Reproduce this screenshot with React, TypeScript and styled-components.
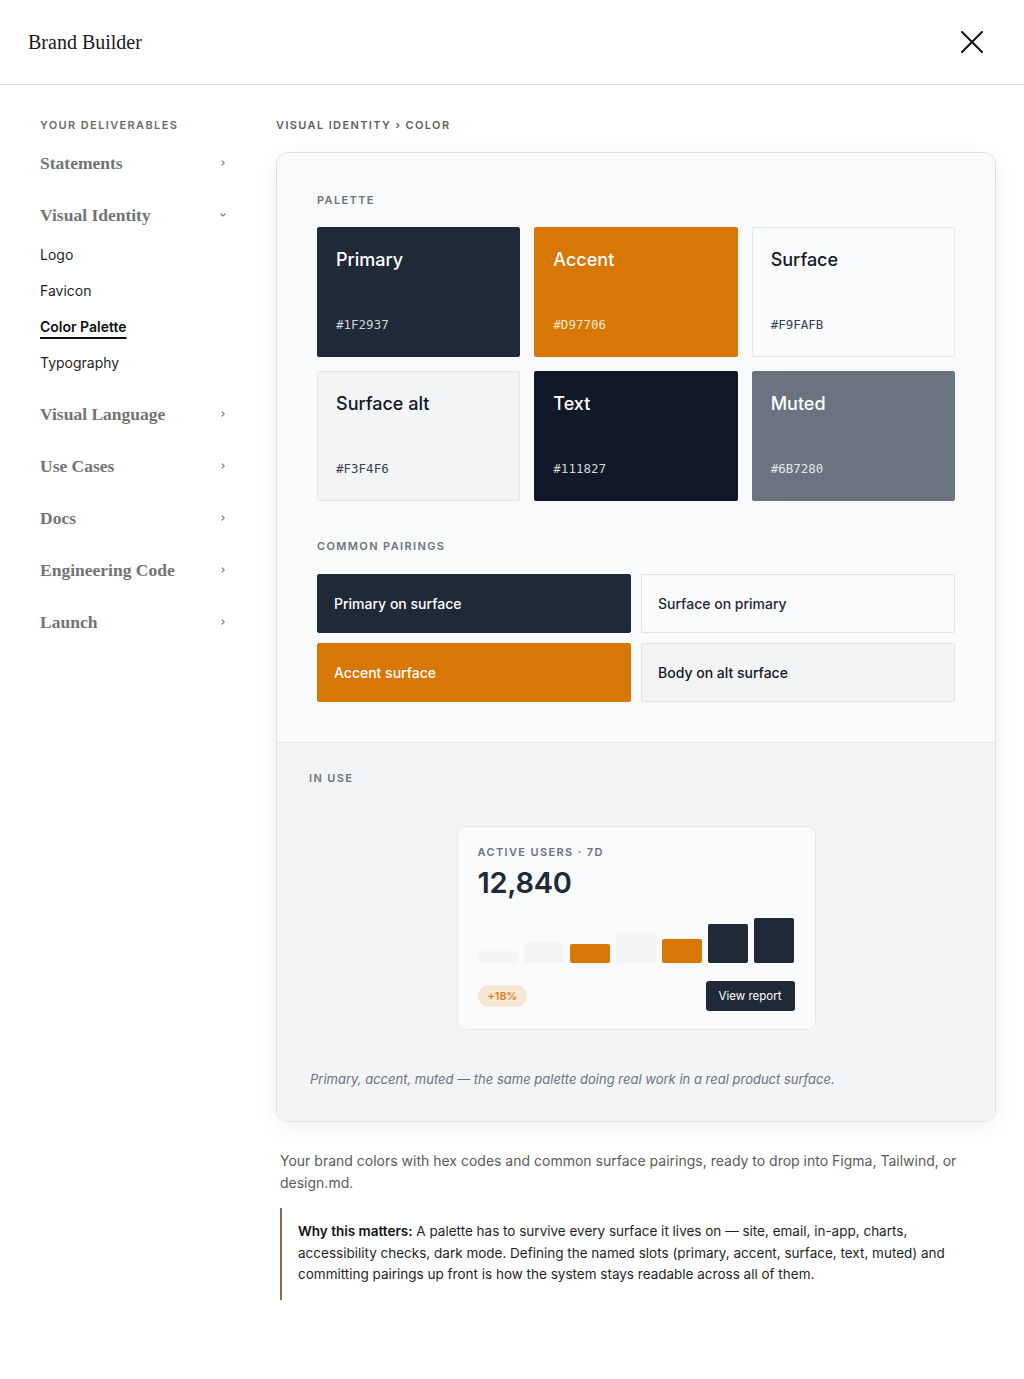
import React from "react";
import styled, { createGlobalStyle } from "styled-components";

const Global = createGlobalStyle`
  * { box-sizing: border-box; }
  html, body { margin: 0; padding: 0; background: #ffffff; }
  body {
    font-family: Inter, "Noto Sans", "Liberation Sans", sans-serif;
    color: #111827;
    -webkit-font-smoothing: antialiased;
  }
`;

const Page = styled.div`
  width: 1024px;
  min-height: 1379px;
  background: #ffffff;
`;

const Header = styled.header`
  height: 85px;
  padding: 0 40px 0 28px;
  display: flex;
  align-items: center;
  justify-content: space-between;
  border-bottom: 1px solid #e4ded7;
`;

const Brand = styled.h1`
  margin: 0;
  font-family: "Liberation Serif", "DejaVu Serif", serif;
  font-size: 20px;
  font-weight: 400;
  color: #1a1a1a;
`;

const CloseButton = styled.button`
  border: 0;
  background: transparent;
  padding: 0;
  width: 24px;
  height: 24px;
  display: flex;
  align-items: center;
  justify-content: center;
  color: #111111;
`;

const Body = styled.div`
  display: flex;
  gap: 40px;
`;

const Sidebar = styled.nav`
  width: 236px;
  flex-shrink: 0;
  padding: 33px 8px 0 40px;
`;

const Eyebrow = styled.div<{ $tone?: string }>`
  font-family: Inter, "Liberation Sans", sans-serif;
  font-size: 11px;
  line-height: 14px;
  font-weight: 600;
  letter-spacing: 0.125em;
  text-transform: uppercase;
  color: ${(p) => p.$tone ?? "#6b6b6b"};
`;

const NavList = styled.div`
  margin-top: 5px;
  display: flex;
  flex-direction: column;
`;

const GroupRow = styled.div`
  height: 52px;
  display: flex;
  align-items: center;
  justify-content: space-between;
  font-family: "Liberation Serif", "DejaVu Serif", serif;
  font-size: 17.5px;
  font-weight: 700;
  color: #737373;
`;

const SubList = styled.div`
  margin: -5px 0 8px;
  display: flex;
  flex-direction: column;
`;

const SubItem = styled.div<{ $active?: boolean }>`
  height: 36px;
  display: flex;
  align-items: center;
  font-size: 14px;
  font-weight: ${(p) => (p.$active ? 600 : 400)};
  color: ${(p) => (p.$active ? "#111111" : "#1f1f1f")};

  span {
    ${(p) =>
      p.$active
        ? `text-decoration: underline; text-decoration-thickness: 2px; text-underline-offset: 5px;`
        : ""}
  }
`;

const Main = styled.main`
  width: 720px;
  padding-top: 33px;
  padding-bottom: 60px;
`;

const Crumb = styled(Eyebrow)`
  margin-bottom: 20px;
  color: #5f5f5f;
`;

const Card = styled.section`
  border: 1px solid #e7ded3;
  border-radius: 12px;
  background: #f9fafb;
  overflow: hidden;
  box-shadow: 0 6px 22px rgba(17, 24, 39, 0.06);
`;

const TopPart = styled.div`
  padding: 40px 40px 40px;
`;

const SwatchGrid = styled.div`
  margin-top: 20px;
  display: grid;
  grid-template-columns: repeat(3, 1fr);
  gap: 14px;
`;

const Swatch = styled.div<{ $bg: string; $fg: string; $hex: string; $outlined?: boolean }>`
  height: 130px;
  border-radius: 2px;
  background: ${(p) => p.$bg};
  border: 1px solid ${(p) => (p.$outlined ? "#e5e7eb" : p.$bg)};
  padding: 20px 18px 23px;
  display: flex;
  flex-direction: column;
  justify-content: space-between;

  strong {
    font-size: 18px;
    line-height: 24px;
    font-weight: 500;
    color: ${(p) => p.$fg};
  }

  code {
    font-family: "DejaVu Sans Mono", "Liberation Mono", monospace;
    font-size: 12.5px;
    line-height: 16px;
    color: ${(p) => p.$hex};
  }
`;

const PairLabel = styled(Eyebrow)`
  margin-top: 38px;
`;

const PairGrid = styled.div`
  margin-top: 21px;
  display: grid;
  grid-template-columns: 1fr 1fr;
  gap: 10px;
`;

const Pair = styled.div<{ $bg: string; $fg: string; $outlined?: boolean }>`
  height: 59px;
  border-radius: 2px;
  background: ${(p) => p.$bg};
  border: 1px solid ${(p) => (p.$outlined ? "#dfe2e6" : p.$bg)};
  color: ${(p) => p.$fg};
  display: flex;
  align-items: center;
  padding: 0 16px;
  font-size: 14px;
  font-weight: 500;
`;

const InUse = styled.div`
  background: #f3f4f6;
  border-top: 1px solid #e5e7eb;
  padding: 28px 32px 32px;
`;

const DemoCard = styled.div`
  width: 359px;
  margin: 41px auto 0;
  background: #f9fafb;
  border: 1px solid #e5e7eb;
  border-radius: 8px;
  padding: 18px 20px 18px;
`;

const Metric = styled.div`
  margin-top: 6px;
  font-size: 29px;
  line-height: 36px;
  font-weight: 600;
  color: #1f2937;
  letter-spacing: -0.01em;
`;

const Bars = styled.div`
  margin-top: 17px;
  height: 45px;
  display: flex;
  align-items: flex-end;
  gap: 6px;
`;

const Bar = styled.div<{ $color: string }>`
  flex: 1;
  border-radius: 2px;
  background: ${(p) => p.$color};
`;

const DemoFooter = styled.div`
  margin-top: 18px;
  display: flex;
  align-items: center;
  justify-content: space-between;
`;

const Delta = styled.span`
  height: 22px;
  padding: 0 10px;
  border-radius: 11px;
  background: #f6e6d4;
  color: #d97706;
  font-size: 11px;
  font-weight: 500;
  display: inline-flex;
  align-items: center;
`;

const ReportButton = styled.button`
  height: 30px;
  padding: 0 13px;
  border: 0;
  border-radius: 3px;
  background: #1f2937;
  color: #ffffff;
  font-family: Inter, "Liberation Sans", sans-serif;
  font-size: 11.5px;
`;

const Caption = styled.p`
  margin: 39px 0 0 1px;
  font-size: 13px;
  line-height: 20px;
  font-style: italic;
  color: #6b7280;
`;

const Description = styled.p`
  margin: 28px 0 0;
  padding: 0 4px;
  max-width: 700px;
  font-size: 14px;
  line-height: 22px;
  color: #5b5b5b;
`;

const Note = styled.blockquote`
  margin: 14px 0 0 4px;
  width: 678px;
  padding: 13px 0 14px 16px;
  border-left: 2px solid #8d6b47;
  font-size: 13.5px;
  line-height: 21.5px;
  color: #1f1f1f;

  b {
    font-weight: 600;
    color: #111111;
  }
`;

const Chevron = ({ down }: { down?: boolean }) => (
  <svg width="10" height="10" viewBox="0 0 10 10" fill="none">
    <path
      d={down ? "M2.8 3.8 L5 6 L7.2 3.8" : "M4 2.8 L6.2 5 L4 7.2"}
      stroke="#7a7a7a"
      strokeWidth="1.1"
      strokeLinecap="round"
      strokeLinejoin="round"
    />
  </svg>
);

const swatches = [
  { name: "Primary", hex: "#1F2937", bg: "#1f2937", fg: "#ffffff", hc: "#d1d5db" },
  { name: "Accent", hex: "#D97706", bg: "#d97706", fg: "#ffffff", hc: "#fde7c8" },
  { name: "Surface", hex: "#F9FAFB", bg: "#f9fafb", fg: "#111827", hc: "#374151", outlined: true },
  { name: "Surface alt", hex: "#F3F4F6", bg: "#f3f4f6", fg: "#111827", hc: "#374151", outlined: true },
  { name: "Text", hex: "#111827", bg: "#111827", fg: "#ffffff", hc: "#d1d5db" },
  { name: "Muted", hex: "#6B7280", bg: "#6b7280", fg: "#ffffff", hc: "#e5e7eb" },
];

const pairs = [
  { label: "Primary on surface", bg: "#1f2937", fg: "#ffffff" },
  { label: "Surface on primary", bg: "#f9fafb", fg: "#1f2937", outlined: true },
  { label: "Accent surface", bg: "#d97706", fg: "#ffffff" },
  { label: "Body on alt surface", bg: "#f3f4f6", fg: "#111827", outlined: true },
];

const bars = [
  { h: 12, c: "#f3f4f6" },
  { h: 21, c: "#f3f4f6" },
  { h: 19, c: "#d97706" },
  { h: 31, c: "#f3f4f6" },
  { h: 24, c: "#d97706" },
  { h: 39, c: "#1f2937" },
  { h: 45, c: "#1f2937" },
];

const groupsAfter = ["Visual Language", "Use Cases", "Docs", "Engineering Code", "Launch"];

export default function App() {
  return (
    <Page>
      <Global />
      <Header>
        <Brand>Brand Builder</Brand>
        <CloseButton aria-label="Close">
          <svg width="22" height="22" viewBox="0 0 22 22" fill="none">
            <path d="M1 1 L21 21 M21 1 L1 21" stroke="#111111" strokeWidth="2" strokeLinecap="round" />
          </svg>
        </CloseButton>
      </Header>
      <Body>
        <Sidebar>
          <Eyebrow>Your deliverables</Eyebrow>
          <NavList>
            <GroupRow>
              Statements
              <Chevron />
            </GroupRow>
            <GroupRow>
              Visual Identity
              <Chevron down />
            </GroupRow>
            <SubList>
              <SubItem><span>Logo</span></SubItem>
              <SubItem><span>Favicon</span></SubItem>
              <SubItem $active><span>Color Palette</span></SubItem>
              <SubItem><span>Typography</span></SubItem>
            </SubList>
            {groupsAfter.map((g) => (
              <GroupRow key={g}>
                {g}
                <Chevron />
              </GroupRow>
            ))}
          </NavList>
        </Sidebar>
        <Main>
          <Crumb>Visual identity › Color</Crumb>
          <Card>
            <TopPart>
              <Eyebrow $tone="#6b7280">Palette</Eyebrow>
              <SwatchGrid>
                {swatches.map((s) => (
                  <Swatch key={s.name} $bg={s.bg} $fg={s.fg} $hex={s.hc} $outlined={s.outlined}>
                    <strong>{s.name}</strong>
                    <code>{s.hex}</code>
                  </Swatch>
                ))}
              </SwatchGrid>
              <PairLabel $tone="#6b7280">Common pairings</PairLabel>
              <PairGrid>
                {pairs.map((p) => (
                  <Pair key={p.label} $bg={p.bg} $fg={p.fg} $outlined={p.outlined}>
                    {p.label}
                  </Pair>
                ))}
              </PairGrid>
            </TopPart>
            <InUse>
              <Eyebrow $tone="#6b7280">In use</Eyebrow>
              <DemoCard>
                <Eyebrow $tone="#6b7280">Active users · 7d</Eyebrow>
                <Metric>12,840</Metric>
                <Bars>
                  {bars.map((b, i) => (
                    <Bar key={i} $color={b.c} style={{ height: b.h }} />
                  ))}
                </Bars>
                <DemoFooter>
                  <Delta>+18%</Delta>
                  <ReportButton>View report</ReportButton>
                </DemoFooter>
              </DemoCard>
              <Caption>Primary, accent, muted — the same palette doing real work in a real product surface.</Caption>
            </InUse>
          </Card>
          <Description>
            Your brand colors with hex codes and common surface pairings, ready to drop into Figma, Tailwind, or
            design.md.
          </Description>
          <Note>
            <b>Why this matters:</b> A palette has to survive every surface it lives on — site, email, in-app, charts,
            accessibility checks, dark mode. Defining the named slots (primary, accent, surface, text, muted) and
            committing pairings up front is how the system stays readable across all of them.
          </Note>
        </Main>
      </Body>
    </Page>
  );
}
